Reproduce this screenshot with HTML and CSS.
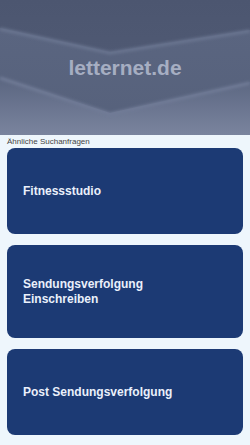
FILE: index.html
```html
<!DOCTYPE html>
<html lang="de">
<head>
<meta charset="utf-8">
<title>letternet.de</title>
<link rel="stylesheet" href="styles.css">
</head>
<body>
<header class="hero">
  <svg class="hero-bg" viewBox="0 0 250 135" preserveAspectRatio="none" aria-hidden="true">
    <defs>
      <linearGradient id="g1" x1="0" y1="0" x2="0" y2="1">
        <stop offset="0" stop-color="#4c5670"/>
        <stop offset="1" stop-color="#535d77"/>
      </linearGradient>
      <linearGradient id="g2" x1="0" y1="0" x2="0" y2="1">
        <stop offset="0" stop-color="#5a6580"/>
        <stop offset="1" stop-color="#56617b"/>
      </linearGradient>
      <linearGradient id="g3" x1="0" y1="0" x2="0" y2="1">
        <stop offset="0" stop-color="#5a6580"/>
        <stop offset="1" stop-color="#7a849e"/>
      </linearGradient>
      <filter id="soft" x="-10%" y="-50%" width="120%" height="200%">
        <feGaussianBlur stdDeviation="1.5"/>
      </filter>
    </defs>
    <rect x="0" y="0" width="250" height="135" fill="url(#g1)"/>
    <polygon points="0,28 110,52 250,30 250,135 0,135" fill="url(#g2)"/>
    <polyline points="0,29 110,53 250,31" fill="none" stroke="#6b7691" stroke-width="3" filter="url(#soft)"/>
    <polygon points="0,77 110,113 250,82 250,135 0,135" fill="url(#g3)"/>
    <polyline points="0,78 110,114 250,83" fill="none" stroke="#717c97" stroke-width="3" filter="url(#soft)"/>
  </svg>
  <h1 class="hero-title">letternet.de</h1>
</header>
<main class="content">
  <div class="label">Ähnliche Suchanfragen</div>
  <div class="cards">
    <a class="card" href="#">Fitnessstudio</a>
    <a class="card" href="#">Sendungsverfolgung Einschreiben</a>
    <a class="card" href="#">Post Sendungsverfolgung</a>
  </div>
</main>
</body>
</html>
```

FILE: styles.css
```css
html, body {
  margin: 0;
  padding: 0;
}
body {
  background: #eef6fc;
  font-family: "Liberation Sans", Arial, sans-serif;
  width: 250px;
  height: 445px;
  overflow: hidden;
}
.hero {
  position: relative;
  height: 135px;
  display: flex;
  align-items: center;
  justify-content: center;
  overflow: hidden;
}
.hero-bg {
  position: absolute;
  inset: 0;
  width: 100%;
  height: 100%;
}
.hero-title {
  position: relative;
  margin: 0;
  font-size: 21px;
  font-weight: bold;
  color: #a6aec2;
  line-height: 1;
}
.label {
  font-size: 8px;
  color: #444;
  line-height: 12px;
  padding: 1px 7px 0;
}
.cards {
  display: flex;
  flex-direction: column;
  gap: 11px;
  padding: 0 7px;
}
.card {
  display: flex;
  align-items: center;
  box-sizing: border-box;
  min-height: 86px;
  padding: 32px 70px 32px 16px;
  background: #1c3a74;
  border-radius: 8px;
  color: #eaf0fb;
  font-size: 12px;
  font-weight: bold;
  line-height: 14.5px;
  text-decoration: none;
}
```
